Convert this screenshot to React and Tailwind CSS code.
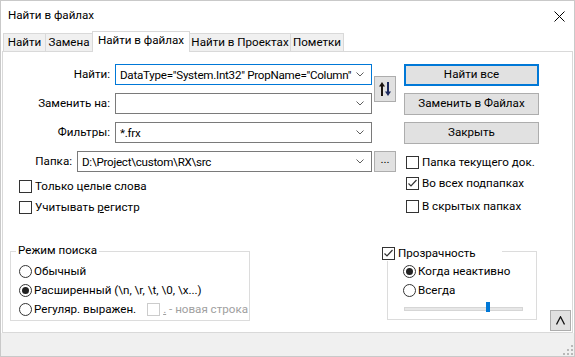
import React from "react";

function Chevron() {
  return (
    <svg width="8" height="5" viewBox="0 0 8 5" className="shrink-0">
      <polyline points="0.5,0.5 4,4 7.5,0.5" fill="none" stroke="#5f5f5f" strokeWidth="1" />
    </svg>
  );
}

function Combo({ w, text, focused }) {
  return (
    <div
      className={
        "h-[21px] border flex items-center pl-[4px] pr-[7px] bg-white " +
        w +
        (focused ? " border-[#0078d7]" : " border-[#7a7a7a]")
      }
    >
      <span className="flex-1 whitespace-nowrap overflow-hidden leading-[16px] tracking-[-0.25px]">{text}</span>
      <Chevron />
    </div>
  );
}

function CheckBox({ checked, disabled }) {
  return (
    <div
      className={
        "w-[13px] h-[13px] border bg-white shrink-0 flex items-center justify-center " +
        (disabled ? "border-[#cccccc]" : "border-[#333333]")
      }
    >
      {checked && (
        <svg width="11" height="11" viewBox="0 0 11 11">
          <polyline points="1.5,5.5 4,8 9.5,2" fill="none" stroke="#333333" strokeWidth="1.2" />
        </svg>
      )}
    </div>
  );
}

function Radio({ checked }) {
  return (
    <div className="w-[13px] h-[13px] rounded-full border border-[#333333] bg-white shrink-0 flex items-center justify-center">
      {checked && <div className="w-[7px] h-[7px] rounded-full bg-[#222222]" />}
    </div>
  );
}

function Btn({ children, def }) {
  return (
    <div
      className={
        "h-[22px] w-full flex items-center justify-center bg-[#e1e1e1] whitespace-nowrap " +
        (def ? "border-2 border-[#0078d7]" : "border border-[#adadad]")
      }
    >
      {children}
    </div>
  );
}

function LabeledCombo({ label, text, focused }) {
  return (
    <div className="flex items-center">
      <div className="w-[112px] pr-[5px] text-right">{label}</div>
      <Combo w="w-[257px]" text={text} focused={focused} />
    </div>
  );
}

export default function App() {
  return (
    <div className="w-[575px] h-[357px] bg-white border border-[#c9c9c9] flex flex-col font-['Roboto',sans-serif] text-[11.6px] text-black leading-none overflow-hidden whitespace-nowrap">
      {/* title bar */}
      <div className="h-[30px] flex items-center justify-between pl-[7px] pr-[9px] shrink-0">
        <span>Найти в файлах</span>
        <svg width="11" height="11" viewBox="0 0 11 11">
          <line x1="0.5" y1="0.5" x2="10.5" y2="10.5" stroke="#000" strokeWidth="1" />
          <line x1="10.5" y1="0.5" x2="0.5" y2="10.5" stroke="#000" strokeWidth="1" />
        </svg>
      </div>

      {/* tabs */}
      <div className="h-[20px] flex items-end pl-[2px] shrink-0">
        <div className="h-[18px] w-[43px] border-l border-t border-r border-[#d9d9d9] bg-[#f0f0f0] flex items-center justify-center">
          Найти
        </div>
        <div className="h-[18px] w-[47px] border-t border-r border-[#d9d9d9] bg-[#f0f0f0] flex items-center justify-center">
          Замена
        </div>
        <div className="relative z-10 h-[21px] w-[98px] -ml-[1px] -mb-[1px] border-l border-t border-r border-[#d9d9d9] bg-white flex items-center justify-center pb-[2px]">
          Найти в файлах
        </div>
        <div className="h-[18px] w-[101px] border-t border-r border-[#d9d9d9] bg-[#f0f0f0] flex items-center justify-center">
          Найти в Проектах
        </div>
        <div className="h-[18px] w-[53px] border-t border-r border-[#d9d9d9] bg-[#f0f0f0] flex items-center justify-center">
          Пометки
        </div>
      </div>

      {/* panel */}
      <div className="ml-[1px] w-[571px] h-[282px] border border-[#d9d9d9] flex flex-col shrink-0">
        <div className="flex pt-[12px]">
          {/* left column */}
          <div className="w-[393px] flex flex-col">
            <div className="flex items-center">
              <div className="flex flex-col gap-[8px]">
                <LabeledCombo label="Найти:" text={'DataType="System.Int32" PropName="Column"'} focused />
                <LabeledCombo label="Заменить на:" text="" />
              </div>
              <div className="ml-[2px] w-[22px] h-[26px] bg-[#e1e1e1] border border-[#adadad] flex items-center justify-center">
                <svg width="12" height="14" viewBox="0 0 12 14">
                  <line x1="3" y1="3" x2="3" y2="14" stroke="#1a1410" strokeWidth="2" />
                  <polygon points="0,4.5 3,0 6,4.5" fill="#1a1410" />
                  <line x1="9" y1="0" x2="9" y2="11" stroke="#1c2a5e" strokeWidth="2" />
                  <polygon points="6,9.5 9,14 12,9.5" fill="#1c2a5e" />
                </svg>
              </div>
            </div>
            <div className="mt-[8px]">
              <LabeledCombo label="Фильтры:" text="*.frx" />
            </div>
            <div className="mt-[8px] flex items-center">
              <div className="w-[74px] pr-[5px] text-right">Папка:</div>
              <Combo w="w-[295px]" text={"D:\\Project\\custom\\RX\\src"} />
              <div className="ml-[2px] w-[22px] h-[21px] bg-[#e1e1e1] border border-[#adadad] flex items-end justify-center pb-[5px]">
                ...
              </div>
            </div>
            <div className="mt-[8px] pl-[16px] h-[13px] flex items-center gap-[3px]">
              <CheckBox />
              <span>Только целые слова</span>
            </div>
            <div className="mt-[8px] pl-[16px] h-[13px] flex items-center gap-[3px]">
              <CheckBox />
              <span>
                Учитывать <span className="underline">р</span>егистр
              </span>
            </div>
          </div>

          {/* right column */}
          <div className="ml-[8px] w-[135px] flex flex-col">
            <div className="flex flex-col gap-[7px]">
              <Btn def>Найти все</Btn>
              <Btn>Заменить в Файлах</Btn>
              <Btn>Закрыть</Btn>
            </div>
            <div className="mt-[12px] pl-[2px] h-[13px] flex items-center gap-[3px]">
              <CheckBox />
              <span>Папка текущего док.</span>
            </div>
            <div className="mt-[8px] pl-[2px] h-[13px] flex items-center gap-[3px]">
              <CheckBox checked />
              <span>Во всех подпапках</span>
            </div>
            <div className="mt-[10px] pl-[2px] h-[13px] flex items-center gap-[3px]">
              <CheckBox />
              <span>В скрытых папках</span>
            </div>
          </div>
        </div>

        {/* bottom */}
        <div className="flex items-start mt-[37px]">
          <div className="relative ml-[7px] w-[240px] h-[70px] border border-[#dcdcdc] pt-[10px] pl-[8px] flex flex-col">
            <div className="absolute left-[5px] top-[-8px] px-[2px] bg-white h-[14px] flex items-center">
              Режим поиска
            </div>
            <div className="h-[19px] flex items-center gap-[2px]">
              <Radio />
              <span>Обычный</span>
            </div>
            <div className="h-[19px] flex items-center gap-[2px]">
              <Radio checked />
              <span>{"Расширенный (\\n, \\r, \\t, \\0, \\x...)"}</span>
            </div>
            <div className="h-[19px] flex items-center gap-[2px]">
              <Radio />
              <span>Регуляр. выражен.</span>
              <div className="ml-[9px] flex items-center gap-[3px] text-[#a0a0a0]">
                <CheckBox disabled />
                <span>
                  <span className="underline">.</span> - новая строка
                </span>
              </div>
            </div>
          </div>

          <div className="relative ml-[137px] w-[150px] h-[69px] border border-[#dcdcdc] pt-[10px] pl-[15px] flex flex-col">
            <div className="absolute left-[-6px] top-[-6px] w-[120px] h-[15px] bg-white flex items-center gap-[3px]">
              <CheckBox checked />
              <span>Прозрачность</span>
            </div>
            <div className="h-[19px] flex items-center gap-[2px]">
              <Radio checked />
              <span>Когда неактивно</span>
            </div>
            <div className="h-[19px] flex items-center gap-[2px]">
              <Radio />
              <span>Всегда</span>
            </div>
            <div className="relative mt-[7px] ml-[1px] w-[119px] h-[4px] bg-[#e7e7e7] border border-[#d6d6d6]">
              <div className="absolute left-[81px] top-[-6px] w-[4px] h-[10px] bg-[#0078d7]" />
            </div>
          </div>

          <div className="ml-[13px] mt-[59px] w-[21px] h-[21px] bg-[#e1e1e1] border border-[#adadad] flex items-center justify-center">
            <svg width="9" height="9" viewBox="0 0 9 9">
              <polyline points="0.5,8.5 4.5,0.8 8.5,8.5" fill="none" stroke="#111" strokeWidth="1.3" />
            </svg>
          </div>
        </div>
      </div>

      {/* bottom strip */}
      <div className="flex-1 bg-[#f0f0f0] flex items-end justify-end pr-[1px] pb-[1px]">
        <svg width="10" height="10" viewBox="0 0 10 10">
          <rect x="8" y="0" width="2" height="2" fill="#b8b8b8" />
          <rect x="4" y="4" width="2" height="2" fill="#b8b8b8" />
          <rect x="8" y="4" width="2" height="2" fill="#b8b8b8" />
          <rect x="0" y="8" width="2" height="2" fill="#b8b8b8" />
          <rect x="4" y="8" width="2" height="2" fill="#b8b8b8" />
          <rect x="8" y="8" width="2" height="2" fill="#b8b8b8" />
        </svg>
      </div>
    </div>
  );
}
